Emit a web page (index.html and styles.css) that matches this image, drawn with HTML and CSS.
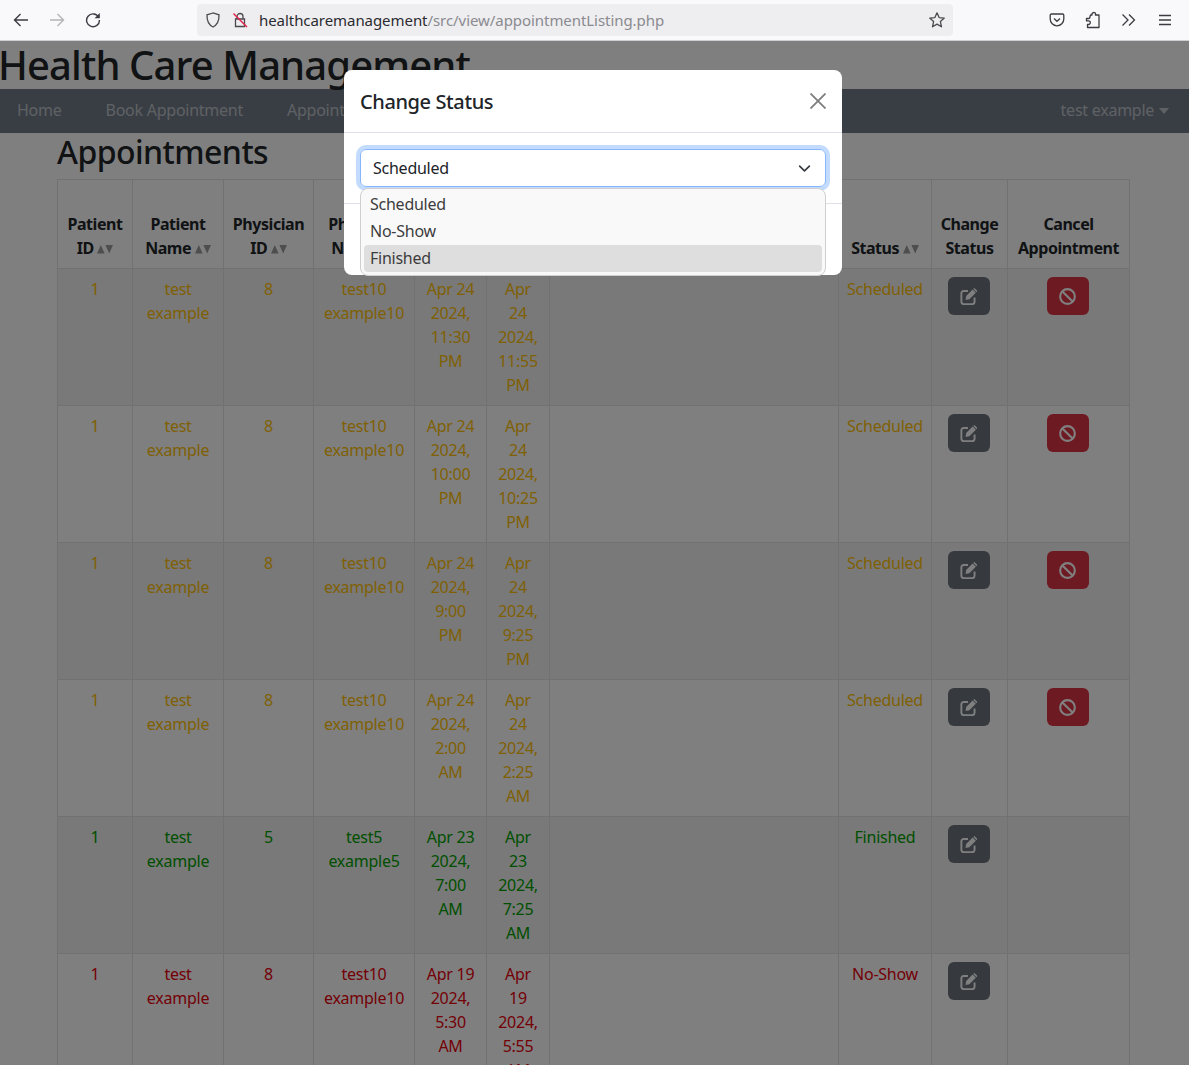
FILE: index.html
```html
<!DOCTYPE html>
<html lang="en">
<head>
    <meta charset="UTF-8">
    <meta name="viewport" content="width=device-width, initial-scale=1.0">
    <title>Appointments</title>
    <link rel="stylesheet" href="styles.css">
</head>
<body>
    <svg class="icon-defs" aria-hidden="true">
        <symbol id="i-sort" viewBox="0 0 16 10"><path d="M0 9.500 3.800 1 7.600 9.500zM8.400 1H16l-3.800 8.500z"/></symbol>
        <symbol id="i-edit" viewBox="0 0 16 16">
            <path d="M7.500 2.800H3.500a2.200 2.200 0 0 0-2.200 2.200v8a2.200 2.200 0 0 0 2.200 2.200h8a2.200 2.200 0 0 0 2.200-2.200V9" fill="none" stroke="currentColor" stroke-width="1.800"/>
            <path d="M5.200 11.300 5.800 7.600 11.900 1.500 14.900 4.500 8.800 10.700zM12.800.6c.4-.4 1-.4 1.400 0l1.600 1.600c.4.4.4 1 0 1.400l-.3.300-3-3z" fill="currentColor"/>
        </symbol>
        <symbol id="i-ban" viewBox="0 0 16 16">
            <circle cx="8" cy="8" r="6.900" fill="none" stroke="currentColor" stroke-width="2"/>
            <path d="M3.200 3.200 12.800 12.800" stroke="currentColor" stroke-width="2"/>
        </symbol>
    </svg>

    <!-- Browser toolbar -->
    <div class="toolbar">
        <div class="tool-group">
            <span class="tool"><svg width="16" height="16" viewBox="0 0 16 16"><path d="M15 8H1.500M7.500 2 1.500 8l6 6" fill="none" stroke="#3b3b42" stroke-width="1.400"/></svg></span>
            <span class="tool"><svg width="16" height="16" viewBox="0 0 16 16"><path d="M1 8h13.500M8.500 2l6 6-6 6" fill="none" stroke="#b4b4b8" stroke-width="1.400"/></svg></span>
            <span class="tool"><svg width="16" height="16" viewBox="0 0 16 16"><path d="M13.600 5.200A6.400 6.400 0 1 0 14.400 8" fill="none" stroke="#3b3b42" stroke-width="1.400"/><path d="M14.800 1v5.200H9.600z" fill="#3b3b42"/></svg></span>
        </div>
        <div class="urlbar">
            <svg class="shield" width="16" height="16" viewBox="0 0 16 16"><path d="M8 1 2 2.800c-.2 6 1.400 10 6 12.200 4.600-2.200 6.200-6.200 6-12.200z" fill="none" stroke="#4a4a50" stroke-width="1.300"/></svg>
            <svg class="lock" width="16" height="16" viewBox="0 0 16 16"><path d="M5 7V4.500a3 3 0 0 1 6 0V7M3.500 7h9v7.500h-9z" fill="none" stroke="#4a4a50" stroke-width="1.300"/><path d="M1.500 1.500 15 15" stroke="#e0264f" stroke-width="1.500"/></svg>
            <span class="url"><span class="url-host">healthcaremanagement</span>/src/view/appointmentListing.php</span>
            <svg class="star" width="18" height="18" viewBox="0 0 18 18"><path d="M9 1.800 11.100 6.600 16.300 7.100 12.400 10.600 13.500 15.800 9 13.100 4.500 15.800 5.600 10.600 1.700 7.100 6.900 6.600z" fill="none" stroke="#4a4a50" stroke-width="1.300" stroke-linejoin="round"/></svg>
        </div>
        <div class="tool-group tool-group-right">
            <span class="tool"><svg width="16" height="16" viewBox="0 0 16 16"><path d="M2.500 2h11c.8 0 1.300.5 1.300 1.300V7A6.800 6.800 0 0 1 1.200 7V3.300C1.200 2.500 1.700 2 2.500 2z" fill="none" stroke="#3b3b42" stroke-width="1.300"/><path d="M5 6.500 8 9.300l3-2.800" fill="none" stroke="#3b3b42" stroke-width="1.300"/></svg></span>
            <span class="tool"><svg width="16" height="18" viewBox="0 0 16 18"><path d="M5.500 4H7c-.8-2.800 3.600-3.500 3.600-.7 0 .3-.1.500-.2.700H14v12.500H2.500v-3h1c2.400 0 2.400-4-.2-3.600H1.500V7.500h1.800c1.500 0 1.800-1 1.700-2z" fill="none" stroke="#3b3b42" stroke-width="1.300" stroke-linejoin="round"/></svg></span>
            <span class="tool"><svg width="16" height="16" viewBox="0 0 16 16"><path d="M1.500 2.500 7 8l-5.500 5.500M8 2.500 13.500 8 8 13.500" fill="none" stroke="#3b3b42" stroke-width="1.300"/></svg></span>
            <span class="tool"><svg width="16" height="16" viewBox="0 0 16 16"><path d="M2 3.500h12M2 8h12M2 12.500h12" fill="none" stroke="#3b3b42" stroke-width="1.400"/></svg></span>
        </div>
    </div>

    <div class="viewport">
        <h1 class="site-title">Health Care Management</h1>

        <nav class="navbar">
            <a class="nav-link" href="#">Home</a>
            <a class="nav-link" href="#">Book Appointment</a>
            <a class="nav-link" href="#">Appointments</a>
            <a class="nav-link nav-user" href="#">test example <span class="caret"></span></a>
        </nav>

        <div class="container">
            <h2 class="page-title">Appointments</h2>
            <table class="appt-table">
                <colgroup>
                    <col class="c-pid"><col class="c-pname"><col class="c-phid"><col class="c-phname"><col class="c-start">
                    <col class="c-end"><col class="c-reason"><col class="c-status"><col class="c-change"><col class="c-cancel">
                </colgroup>
                <thead>
                    <tr>
                        <th>Patient ID <svg class="sort"><use href="#i-sort"/></svg></th>
                        <th>Patient Name <svg class="sort"><use href="#i-sort"/></svg></th>
                        <th>Physician ID <svg class="sort"><use href="#i-sort"/></svg></th>
                        <th>Physician Name <svg class="sort"><use href="#i-sort"/></svg></th>
                        <th>Start</th>
                        <th>End</th>
                        <th>Reason</th>
                        <th>Status <svg class="sort"><use href="#i-sort"/></svg></th>
                        <th>Change Status</th>
                        <th>Cancel Appointment</th>
                    </tr>
                </thead>
                <tbody>
                    <tr class="scheduled">
                        <td>1</td><td>test example</td><td>8</td><td>test10 example10</td><td>Apr 24 2024, 11:30 PM</td><td>Apr 24 2024, 11:55 PM</td><td></td><td>Scheduled</td>
                        <td><button class="btn btn-edit"><svg><use href="#i-edit"/></svg></button></td>
                        <td><button class="btn btn-cancel"><svg><use href="#i-ban"/></svg></button></td>
                    </tr>
                    <tr class="scheduled">
                        <td>1</td><td>test example</td><td>8</td><td>test10 example10</td><td>Apr 24 2024, 10:00 PM</td><td>Apr 24 2024, 10:25 PM</td><td></td><td>Scheduled</td>
                        <td><button class="btn btn-edit"><svg><use href="#i-edit"/></svg></button></td>
                        <td><button class="btn btn-cancel"><svg><use href="#i-ban"/></svg></button></td>
                    </tr>
                    <tr class="scheduled">
                        <td>1</td><td>test example</td><td>8</td><td>test10 example10</td><td>Apr 24 2024, 9:00 PM</td><td>Apr 24 2024, 9:25 PM</td><td></td><td>Scheduled</td>
                        <td><button class="btn btn-edit"><svg><use href="#i-edit"/></svg></button></td>
                        <td><button class="btn btn-cancel"><svg><use href="#i-ban"/></svg></button></td>
                    </tr>
                    <tr class="scheduled">
                        <td>1</td><td>test example</td><td>8</td><td>test10 example10</td><td>Apr 24 2024, 2:00 AM</td><td>Apr 24 2024, 2:25 AM</td><td></td><td>Scheduled</td>
                        <td><button class="btn btn-edit"><svg><use href="#i-edit"/></svg></button></td>
                        <td><button class="btn btn-cancel"><svg><use href="#i-ban"/></svg></button></td>
                    </tr>
                    <tr class="finished">
                        <td>1</td><td>test example</td><td>5</td><td>test5 example5</td><td>Apr 23 2024, 7:00 AM</td><td>Apr 23 2024, 7:25 AM</td><td></td><td>Finished</td>
                        <td><button class="btn btn-edit"><svg><use href="#i-edit"/></svg></button></td>
                        <td></td>
                    </tr>
                    <tr class="noshow">
                        <td>1</td><td>test example</td><td>8</td><td>test10 example10</td><td>Apr 19 2024, 5:30 AM</td><td>Apr 19 2024, 5:55 AM</td><td></td><td>No-Show</td>
                        <td><button class="btn btn-edit"><svg><use href="#i-edit"/></svg></button></td>
                        <td></td>
                    </tr>
                </tbody>
            </table>
        </div>

        <div class="backdrop"></div>

        <!-- Change status modal -->
        <div class="modal">
            <div class="modal-header">
                <div class="modal-title">Change Status</div>
                <svg class="modal-close" width="16" height="16" viewBox="0 0 16 16"><path d="M.5.500l15 15M15.500.500l-15 15" stroke="#7d7d7d" stroke-width="1.800"/></svg>
            </div>
            <div class="modal-body">
                <div class="select-box">
                    <span>Scheduled</span>
                    <svg width="13" height="13" viewBox="0 0 16 16"><path d="M2 5l6 6 6-6" fill="none" stroke="#343a40" stroke-width="2" stroke-linecap="round" stroke-linejoin="round"/></svg>
                </div>
                <ul class="select-list">
                    <li>Scheduled</li>
                    <li>No-Show</li>
                    <li class="active">Finished</li>
                </ul>
            </div>
            <div class="modal-footer"></div>
        </div>
    </div>
</body>
</html>
```

FILE: styles.css
```css
/* General */
* {
    box-sizing: border-box;
}

html, body {
    height: 100%;
}

body {
    margin: 0;
    display: flex;
    flex-direction: column;
    overflow: hidden;
    background: #fff;
    color: #212529;
    font-family: "Noto Sans", "Open Sans", sans-serif;
    font-size: 16px;
    line-height: 24px;
    letter-spacing: -0.25px;
}

.icon-defs {
    display: none;
}

/* Browser toolbar */
.toolbar {
    flex: none;
    display: flex;
    align-items: center;
    height: 41px;
    padding: 0 6px 1px 3px;
    background: #f9f9fb;
    border-bottom: 1px solid #cfcfd3;
}

.tool-group {
    display: flex;
}

.tool-group-right {
    margin-left: auto;
}

.tool {
    display: flex;
    align-items: center;
    justify-content: center;
    width: 36px;
    height: 32px;
}

.urlbar {
    display: flex;
    align-items: center;
    width: 756px;
    height: 32px;
    margin-left: 86px;
    padding: 0 7px 0 8px;
    background: #eeeef0;
    border-radius: 4px;
}

.lock {
    margin-left: 11px;
}

.url {
    margin-left: 11px;
    color: #8a8a8f;
    font-size: 15px;
    letter-spacing: -0.06px;
}

.url-host {
    color: #2b2b30;
}

.star {
    margin-left: auto;
}

/* Page */
.viewport {
    position: relative;
    flex: 1;
    overflow: hidden;
}

.site-title {
    margin: 0 0 0 -2px;
    height: 48px;
    font-size: 40px;
    font-weight: 500;
    line-height: 48px;
    letter-spacing: -0.9px;
}

.navbar {
    display: flex;
    align-items: center;
    gap: 44px;
    height: 44px;
    padding: 0 20px 2px 17px;
    background: #727d8a;
}

.nav-link {
    color: rgba(255, 255, 255, 0.55);
    text-decoration: none;
}

.nav-user {
    margin-left: auto;
}

.caret {
    display: inline-block;
    margin-left: 1px;
    vertical-align: 2px;
    border-top: 6px solid rgba(255, 255, 255, 0.55);
    border-left: 5.500px solid transparent;
    border-right: 5.500px solid transparent;
}

.container {
    padding: 0 60px 0 57px;
}

.page-title {
    margin: 0 0 8px;
    font-size: 32px;
    font-weight: 500;
    line-height: 38px;
    letter-spacing: -0.55px;
}

/* Table */
.appt-table {
    width: 1072px;
    table-layout: fixed;
    border-collapse: collapse;
    text-align: center;
}

.c-pid { width: 75px; }
.c-pname { width: 91px; }
.c-phid { width: 90px; }
.c-phname { width: 101px; }
.c-start { width: 72px; }
.c-end { width: 63px; }
.c-reason { width: 289px; }
.c-status { width: 93px; }
.c-change { width: 76px; }
.c-cancel { width: 122px; }

.appt-table th, .appt-table td {
    padding: 8px;
    border: 1px solid #dee2e6;
}

.appt-table th {
    height: 89px;
    vertical-align: bottom;
    font-weight: 700;
    letter-spacing: -0.45px;
}

.appt-table td {
    height: 137px;
    vertical-align: top;
}

.appt-table tbody tr:nth-child(odd) {
    background: #f2f2f2;
}

.sort {
    width: 16px;
    height: 10px;
    fill: #9c9c9c;
}

.scheduled td { color: #ffc107; }
.finished td { color: #00a000; }
.noshow td { color: #e8000b; }

.btn {
    display: inline-flex;
    align-items: center;
    justify-content: center;
    width: 42px;
    height: 38px;
    margin-left: -2px;
    padding: 0;
    border: none;
    border-radius: 6px;
    color: #fff;
}

.btn svg {
    width: 17px;
    height: 17px;
}

.btn-edit { background: #6c757d; }
.btn-cancel { background: #dc3545; }

/* Modal */
.backdrop {
    position: absolute;
    inset: 0;
    background: rgba(0, 0, 0, 0.5);
}

.modal {
    position: absolute;
    top: 29px;
    left: 344px;
    width: 498px;
    height: 205px;
    background: #fff;
    border-radius: 8px;
}

.modal-header {
    display: flex;
    align-items: center;
    justify-content: space-between;
    height: 63px;
    padding: 2px 16px 0;
    border-bottom: 1px solid #dee2e6;
}

.modal-title {
    font-size: 20px;
    font-weight: 500;
    letter-spacing: -0.4px;
}

.modal-close {
    margin: -2px 0 0;
}

.modal-body {
    position: relative;
    height: 71px;
    padding: 16px;
    border-bottom: 1px solid #dee2e6;
}

.select-box {
    display: flex;
    align-items: center;
    justify-content: space-between;
    height: 38px;
    padding: 0 14px 0 12px;
    border: 1px solid #86b7fe;
    border-radius: 6px;
    box-shadow: 0 0 0 4px rgba(13, 110, 253, 0.25);
}

.select-list {
    position: absolute;
    top: 55px;
    left: 16px;
    width: 466px;
    margin: 0;
    padding: 2px 3px 3px;
    list-style: none;
    background: #f9f9f9;
    border: 1px solid #cfcfcf;
    border-radius: 8px;
    color: #3d3d3d;
}

.select-list li {
    height: 27px;
    padding: 1px 6px 0;
    border-radius: 4px;
}

.select-list .active {
    background: #dedede;
}
```
